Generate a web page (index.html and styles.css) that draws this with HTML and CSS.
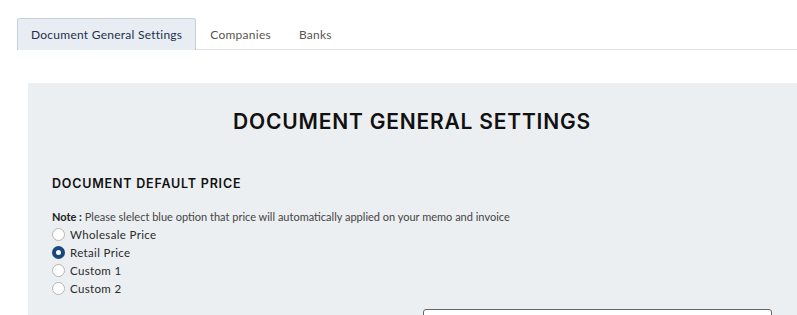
FILE: index.html
```html
<!DOCTYPE html>
<html lang="en">
<head>
  <meta charset="UTF-8" />
  <meta name="viewport" content="width=device-width, initial-scale=1.0" />
  <title>Document Settings</title>
  <link rel="stylesheet" href="styles.css">
</head>
<body>
  <div class="page">
    <nav class="tabs">
      <a class="tab active">Document General Settings</a>
      <a class="tab">Companies</a>
      <a class="tab">Banks</a>
    </nav>

    <section class="panel">
      <h1>DOCUMENT GENERAL SETTINGS</h1>

      <h2>DOCUMENT DEFAULT PRICE</h2>
      <p class="note"><b>Note :</b> Please slelect blue option that price will automatically applied on your memo and invoice</p>

      <div class="options">
        <label class="option"><span class="radio"></span>Wholesale Price</label>
        <label class="option"><span class="radio checked"></span>Retail Price</label>
        <label class="option"><span class="radio"></span>Custom 1</label>
        <label class="option"><span class="radio"></span>Custom 2</label>
      </div>

      <div class="fields">
        <div></div>
        <div class="input"></div>
      </div>
    </section>
  </div>
</body>
</html>
```

FILE: styles.css
```css
body {
  margin: 0;
  font-family: "Lato", "Open Sans", sans-serif;
  background: #fff;
  color: #333;
  overflow: hidden;
}
.page {
  padding: 18px 0 0 17px;
}
.tabs {
  display: flex;
  border-bottom: 1px solid #dee2e6;
  height: 31px;
}
.tab {
  display: block;
  padding: 0 13px;
  line-height: 31px;
  font-size: 12px;
  letter-spacing: 0.25px;
  color: #5a5550;
  border: 1px solid transparent;
  border-bottom: none;
  border-radius: 3px 3px 0 0;
}
.tab.active {
  background: #e8edf3;
  border-color: #c5d0dc;
  color: #1f2f4a;
  margin-bottom: -1px;
  height: 31px;
}
.panel {
  margin: 33px 0 0 11px;
  background: #eceff1;
  padding: 24px 25px 0 24px;
  height: 208px;
  overflow: hidden;
}
.panel h1 {
  margin: 0;
  text-align: center;
  font-family: "Inter", sans-serif;
  font-weight: 600;
  font-size: 21px;
  letter-spacing: 0.8px;
  color: #111;
  line-height: 30px;
}
.panel h2 {
  margin: 39px 0 0;
  font-family: "Inter", sans-serif;
  font-weight: 600;
  font-size: 12.5px;
  letter-spacing: 0.8px;
  color: #111;
}
.note {
  margin: 19px 0 0;
  font-size: 11px;
  color: #444;
}
.note b {
  color: #222;
}
.options {
  display: flex;
  flex-direction: column;
  margin-top: 2px;
}
.option {
  display: flex;
  align-items: center;
  gap: 5px;
  height: 18px;
  font-size: 11.5px;
  letter-spacing: 0.35px;
  color: #2a2a2a;
}
.radio {
  width: 11px;
  height: 11px;
  border: 1px solid #b5b5b5;
  border-radius: 50%;
  background: #fff;
}
.radio.checked {
  width: 5px;
  height: 5px;
  border: 4px solid #174a7c;
}
.fields {
  display: grid;
  grid-template-columns: 371px 1fr;
  margin-top: 12px;
}
.input {
  height: 30px;
  background: #fff;
  border: 1px solid #666;
  border-radius: 3px;
}
```
